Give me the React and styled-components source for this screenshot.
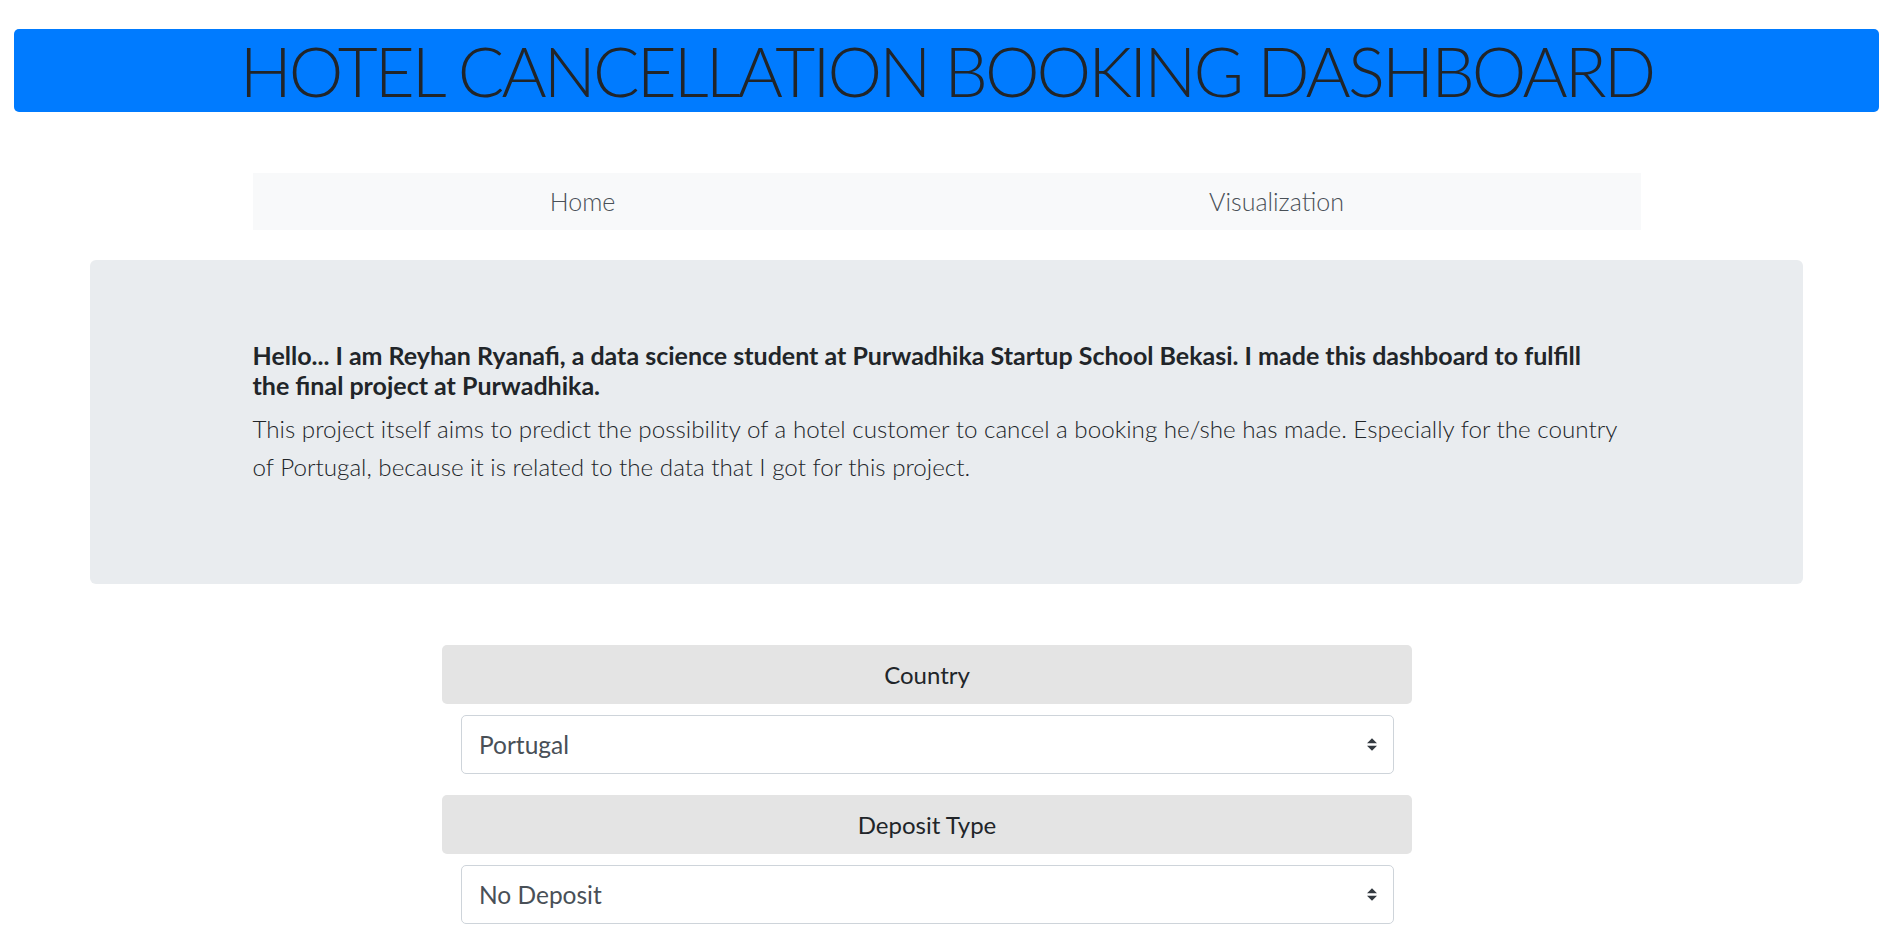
import React from "react";
import styled, { createGlobalStyle } from "styled-components";

const GlobalStyle = createGlobalStyle`
  html, body { margin: 0; padding: 0; background: #fff; }
  body {
    font-family: "Lato", "Open Sans", "Liberation Sans", sans-serif;
    color: #212529;
    -webkit-font-smoothing: antialiased;
  }
  * { box-sizing: border-box; }
`;

const Page = styled.div`
  padding: 29px 4px 0 0;
`;

const TitleBar = styled.h1`
  margin: 0 14px;
  background: #007bff;
  border-radius: 5px;
  text-align: center;
  font-family: "Lato", sans-serif;
  font-weight: 300;
  font-size: 69px;
  letter-spacing: -2.9px;
  line-height: 83px;
  color: #212529;
  white-space: nowrap;
`;

const Container = styled.div`
  width: 1388px;
  margin: 0 auto;
`;

const Nav = styled.nav`
  margin-top: 61px;
  display: flex;
  background: #f8f9fa;
`;

const NavLink = styled.a`
  flex: 1;
  padding-right: 34px;
  text-align: center;
  font-weight: 300;
  font-size: 25px;
  line-height: 57px;
  color: #495057;
  text-decoration: none;
`;

const Jumbotron = styled.section`
  margin: 30px 90px 0;
  padding: 80px 0 79px;
  background: #e9ecef;
  border-radius: 6px;
`;

const Intro = styled.h5`
  margin: 0 0 10px;
  font-weight: 700;
  font-size: 25px;
  line-height: 30px;
  color: #212529;
`;

const Lead = styled.p`
  margin: 0 0 20px;
  font-weight: 300;
  font-size: 24.2px;
  line-height: 37.5px;
  color: #212529;
`;

const FilterPanel = styled.div`
  width: 970px;
  margin: 61px 0 0 442px;
`;

const FilterLabel = styled.div`
  background: #e4e4e4;
  border-radius: 5px;
  height: 59px;
  display: flex;
  align-items: center;
  justify-content: center;
  font-size: 24px;
  font-weight: 400;
  color: #212529;
`;

const SelectBox = styled.div`
  margin: 11px 18px ${(p) => (p.$last ? "0" : "21px")} 19px;
  height: 59px;
  border: 1px solid #ced4da;
  border-radius: 5px;
  background: #fff;
  display: flex;
  align-items: center;
  justify-content: space-between;
  padding: 0 16px 0 17px;
  font-size: 24.5px;
  color: #495057;
`;

const Caret = () => (
  <svg width="10" height="13" viewBox="0 0 4 5" aria-hidden="true">
    <path fill="#343a40" d="M2 0L0 2h4zm0 5L0 3h4z" />
  </svg>
);

const filters = [
  { label: "Country", value: "Portugal" },
  { label: "Deposit Type", value: "No Deposit" },
];

export default function App() {
  return (
    <>
      <GlobalStyle />
      <Page>
        <TitleBar>HOTEL CANCELLATION BOOKING DASHBOARD</TitleBar>
        <Container>
          <Nav>
            <NavLink href="#">Home</NavLink>
            <NavLink href="#">Visualization</NavLink>
          </Nav>
        </Container>
        <Jumbotron>
          <Container>
            <Intro>
              Hello... I am Reyhan Ryanafi, a data science student at Purwadhika Startup School Bekasi. I made this dashboard to fulfill
              <br />
              the final project at Purwadhika.
            </Intro>
            <Lead>
              This project itself aims to predict the possibility of a hotel customer to cancel a booking he/she has made. Especially for the country
              <br />
              of Portugal, because it is related to the data that I got for this project.
            </Lead>
          </Container>
        </Jumbotron>
        <FilterPanel>
          {filters.map((f, i) => (
            <React.Fragment key={f.label}>
              <FilterLabel>{f.label}</FilterLabel>
              <SelectBox $last={i === filters.length - 1}>
                <span>{f.value}</span>
                <Caret />
              </SelectBox>
            </React.Fragment>
          ))}
        </FilterPanel>
      </Page>
    </>
  );
}
